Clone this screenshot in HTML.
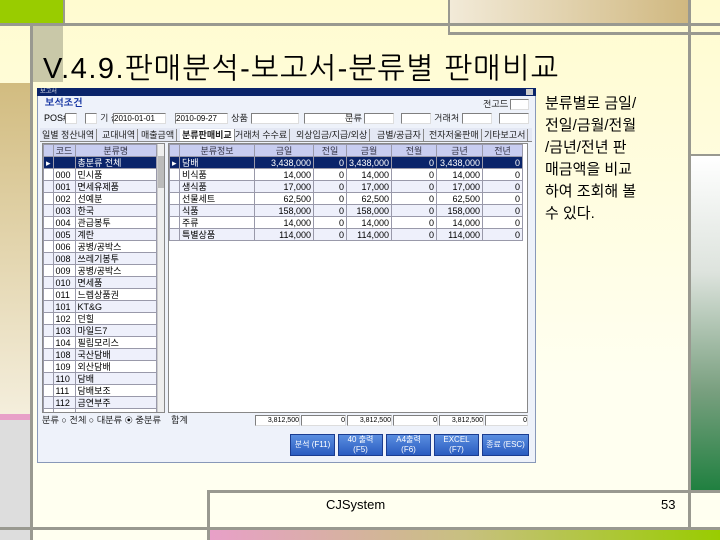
<!DOCTYPE html>
<html><head><meta charset="utf-8"><style>
*{margin:0;padding:0;box-sizing:border-box}
body{width:720px;height:540px;overflow:hidden;position:relative;background:linear-gradient(#fffbd0,#fffff0 70%);font-family:"Liberation Sans","Noto Sans CJK KR",sans-serif}
.a{position:absolute}
.g{background:#999990}
.w{font-size:9px;color:#000;font-family:"Liberation Sans","NanumGothic","Noto Sans CJK KR",sans-serif;line-height:12px;white-space:nowrap}
.in{position:absolute;background:#fff;border:1px solid #7f7f7f;border-right-color:#ddd;border-bottom-color:#ddd;height:11px}
.tb{position:absolute;top:129px;height:12px;font-size:9px;line-height:12px;border-right:1px solid #888;padding:0 2px;color:#222}
table{border-collapse:collapse;position:absolute}
td{border:1px solid #99a;height:12px;padding:0 2px;font-size:9px;line-height:10px;white-space:nowrap;overflow:hidden}
tr.h td{background:#c8cdf0;color:#334;text-align:center}
tr.s td{background:#0a246a;color:#fff}
tr:nth-child(even):not(.h):not(.s) td{background:#eef0fb}
.r{text-align:right}
.btn{position:absolute;top:434px;height:22px;background:linear-gradient(#5a8ee0,#2a5cc0);color:#fff;font-size:8px;text-align:center;line-height:10px;border:1px solid #1a3c90;display:flex;align-items:center;justify-content:center}
</style></head><body>
<!-- frame -->
<div class="a" style="left:0;top:0;width:63px;height:24px;background:#99cc00"></div>
<div class="a" style="left:450px;top:0;width:239px;height:23px;background:linear-gradient(90deg,#f2ead8,#d0b880)"></div>
<div class="a g" style="left:0;top:23px;width:720px;height:3px"></div>
<div class="a g" style="left:450px;top:32px;width:270px;height:3px"></div>
<div class="a g" style="left:63px;top:0;width:2px;height:24px"></div>
<div class="a g" style="left:448px;top:0;width:2px;height:35px"></div>
<div class="a" style="left:30px;top:26px;width:33px;height:56px;background:#c9c8a8"></div>
<div class="a" style="left:0;top:83px;width:30px;height:331px;background:linear-gradient(#d2bc80,#f4eedc)"></div>
<div class="a" style="left:0;top:414px;width:30px;height:6px;background:#e8a0c8"></div>
<div class="a" style="left:0;top:420px;width:30px;height:108px;background:#dddddd"></div>
<div class="a g" style="left:30px;top:26px;width:3px;height:514px"></div>
<div class="a g" style="left:688px;top:0;width:3px;height:540px"></div>
<div class="a g" style="left:691px;top:154px;width:29px;height:2px"></div>
<div class="a" style="left:691px;top:156px;width:29px;height:334px;background:linear-gradient(#fff,#dde3dd 35%,#7aa080 70%,#208040)"></div>
<div class="a g" style="left:209px;top:490px;width:511px;height:3px"></div>
<div class="a g" style="left:207px;top:490px;width:3px;height:50px"></div>
<div class="a g" style="left:0;top:527px;width:720px;height:3px"></div>
<div class="a" style="left:210px;top:530px;width:510px;height:10px;background:linear-gradient(90deg,#e8a0c8,#c8c080 50%,#99cc00)"></div>
<div class="a" style="left:0;top:530px;width:30px;height:10px;background:#ddd"></div>
<div class="a" style="left:326px;top:497px;font-size:13px">CJSystem</div>
<div class="a" style="left:661px;top:497px;font-size:13px">53</div>
<div class="a" style="left:43px;top:50px;font-size:29px;line-height:38px;letter-spacing:1.5px;white-space:nowrap;font-family:'Liberation Sans','NanumGothic','Noto Sans CJK KR',sans-serif">V.4.9.판매분석-보고서-분류별 판매비교</div>
<div class="a" style="left:545px;top:93px;font-size:15px;line-height:22px;width:145px">분류별로 금일/<br>전일/금월/전월<br>/금년/전년 판<br>매금액을 비교<br>하여 조회해 볼<br>수 있다.</div>
<!-- window -->
<div class="a" style="left:37px;top:88px;width:499px;height:375px;background:#eef2fa;border:1px solid #8898b8"></div>
<div class="a" style="left:37px;top:88px;width:499px;height:8px;background:#0a246a"></div>
<div class="a w" style="left:40px;top:86px;color:#fff;font-size:6px">보고서</div>
<div class="a" style="left:526px;top:89px;width:7px;height:6px;background:#ccc"></div>
<div class="a w" style="left:45px;top:98px;color:#1030a0;font-size:10px;font-weight:bold">보석조건</div>
<div class="a w" style="left:483px;top:98px">전고드</div><div class="in" style="left:510px;top:99px;width:19px"></div>
<div class="a w" style="left:44px;top:112px">POS#</div>
<div class="in" style="left:65px;top:113px;width:12px"></div><div class="in" style="left:85px;top:113px;width:12px"></div>
<div class="a w" style="left:100px;top:112px">기 준</div>
<div class="in" style="left:113px;top:113px;width:53px;font-size:8px;line-height:9px">2010-01-01</div>
<div class="in" style="left:175px;top:113px;width:53px;font-size:8px;line-height:9px">2010-09-27</div>
<div class="a w" style="left:231px;top:112px">상품</div>
<div class="in" style="left:251px;top:113px;width:48px"></div><div class="in" style="left:304px;top:113px;width:48px"></div>
<div class="a w" style="left:345px;top:112px">분류</div>
<div class="in" style="left:364px;top:113px;width:30px"></div><div class="in" style="left:401px;top:113px;width:30px"></div>
<div class="a w" style="left:434px;top:112px">거래처</div>
<div class="in" style="left:462px;top:113px;width:30px"></div><div class="in" style="left:499px;top:113px;width:30px"></div>
<div class="a" style="left:40px;top:128px;width:492px;height:14px;background:#e4e8f4;border-bottom:1px solid #888"></div>
<div class="tb" style="left:40px">일별 정산내역</div><div class="tb" style="left:100px">교대내역</div><div class="tb" style="left:139px">매출금액</div><div class="tb" style="left:180px;background:#fff;font-weight:bold">분류판매비교</div><div class="tb" style="left:233px">거래처 수수료</div><div class="tb" style="left:294px">외상입금/지급/외상</div><div class="tb" style="left:375px">금별/공급자</div><div class="tb" style="left:427px">전자저울판매</div><div class="tb" style="left:482px">기타보고서</div>
<div class="a" style="left:42px;top:143px;width:123px;height:270px;background:#fff;border:1px solid #888;overflow:hidden">
<table style="left:0;top:0;width:114px">
<tr class="h"><td style="width:9px"></td><td style="width:22px">코드</td><td>분류명</td></tr>
<tr class="s"><td>▸</td><td></td><td>총분류 전체</td></tr>
<tr><td></td><td>000</td><td>민시품</td></tr><tr><td></td><td>001</td><td>면세유제품</td></tr><tr><td></td><td>002</td><td>선예분</td></tr><tr><td></td><td>003</td><td>한국</td></tr><tr><td></td><td>004</td><td>관급봉투</td></tr><tr><td></td><td>005</td><td>계란</td></tr><tr><td></td><td>006</td><td>공병/공박스</td></tr><tr><td></td><td>008</td><td>쓰레기봉투</td></tr><tr><td></td><td>009</td><td>공병/공박스</td></tr><tr><td></td><td>010</td><td>면세품</td></tr><tr><td></td><td>011</td><td>느렙상품권</td></tr><tr><td></td><td>101</td><td>KT&amp;G</td></tr><tr><td></td><td>102</td><td>던힐</td></tr><tr><td></td><td>103</td><td>마일드7</td></tr><tr><td></td><td>104</td><td>필립모리스</td></tr><tr><td></td><td>108</td><td>국산담배</td></tr><tr><td></td><td>109</td><td>외산담배</td></tr><tr><td></td><td>110</td><td>담배</td></tr><tr><td></td><td>111</td><td>담배보조</td></tr><tr><td></td><td>112</td><td>금연부주</td></tr><tr><td></td><td></td><td></td></tr>
</table>
<div class="a" style="left:114px;top:0;width:8px;height:270px;background:#eee;border-left:1px solid #ccc"><div class="a" style="left:0;top:12px;width:7px;height:32px;background:#bbb"></div></div>
</div>
<div class="a" style="left:168px;top:143px;width:360px;height:270px;background:#fff;border:1px solid #888">
<table style="left:0;top:0;width:354px">
<tr class="h"><td style="width:10px"></td><td style="width:75px">분류정보</td><td style="width:59px">금일</td><td style="width:33px">전일</td><td style="width:42px">금월</td><td style="width:45px">전월</td><td style="width:46px">금년</td><td>전년</td></tr>
<tr class="s"><td>▸</td><td>담배</td><td class="r">3,438,000</td><td class="r">0</td><td class="r">3,438,000</td><td class="r">0</td><td class="r">3,438,000</td><td class="r">0</td></tr>
<tr><td></td><td>비식품</td><td class="r">14,000</td><td class="r">0</td><td class="r">14,000</td><td class="r">0</td><td class="r">14,000</td><td class="r">0</td></tr>
<tr><td></td><td>생식품</td><td class="r">17,000</td><td class="r">0</td><td class="r">17,000</td><td class="r">0</td><td class="r">17,000</td><td class="r">0</td></tr>
<tr><td></td><td>선물세트</td><td class="r">62,500</td><td class="r">0</td><td class="r">62,500</td><td class="r">0</td><td class="r">62,500</td><td class="r">0</td></tr>
<tr><td></td><td>식품</td><td class="r">158,000</td><td class="r">0</td><td class="r">158,000</td><td class="r">0</td><td class="r">158,000</td><td class="r">0</td></tr>
<tr><td></td><td>주류</td><td class="r">14,000</td><td class="r">0</td><td class="r">14,000</td><td class="r">0</td><td class="r">14,000</td><td class="r">0</td></tr>
<tr><td></td><td>특별상품</td><td class="r">114,000</td><td class="r">0</td><td class="r">114,000</td><td class="r">0</td><td class="r">114,000</td><td class="r">0</td></tr>
</table></div>
<div class="a w" style="left:42px;top:414px">분류 ○ 전체 ○ 대분류 ◉ 중분류 &nbsp;&nbsp;&nbsp;합계</div>
<div class="in" style="left:255px;top:415px;width:45px;font-size:7px;line-height:9px;text-align:right">3,812,500</div>
<div class="in" style="left:301px;top:415px;width:45px;font-size:7px;line-height:9px;text-align:right">0</div>
<div class="in" style="left:347px;top:415px;width:45px;font-size:7px;line-height:9px;text-align:right">3,812,500</div>
<div class="in" style="left:393px;top:415px;width:45px;font-size:7px;line-height:9px;text-align:right">0</div>
<div class="in" style="left:439px;top:415px;width:45px;font-size:7px;line-height:9px;text-align:right">3,812,500</div>
<div class="in" style="left:485px;top:415px;width:43px;font-size:7px;line-height:9px;text-align:right">0</div>
<div class="btn" style="left:290px;width:45px">분석 (F11)</div>
<div class="btn" style="left:338px;width:45px">40 출력<br>(F5)</div>
<div class="btn" style="left:386px;width:45px">A4출력<br>(F6)</div>
<div class="btn" style="left:434px;width:45px">EXCEL<br>(F7)</div>
<div class="btn" style="left:482px;width:47px">종료 (ESC)</div>
</body></html>
